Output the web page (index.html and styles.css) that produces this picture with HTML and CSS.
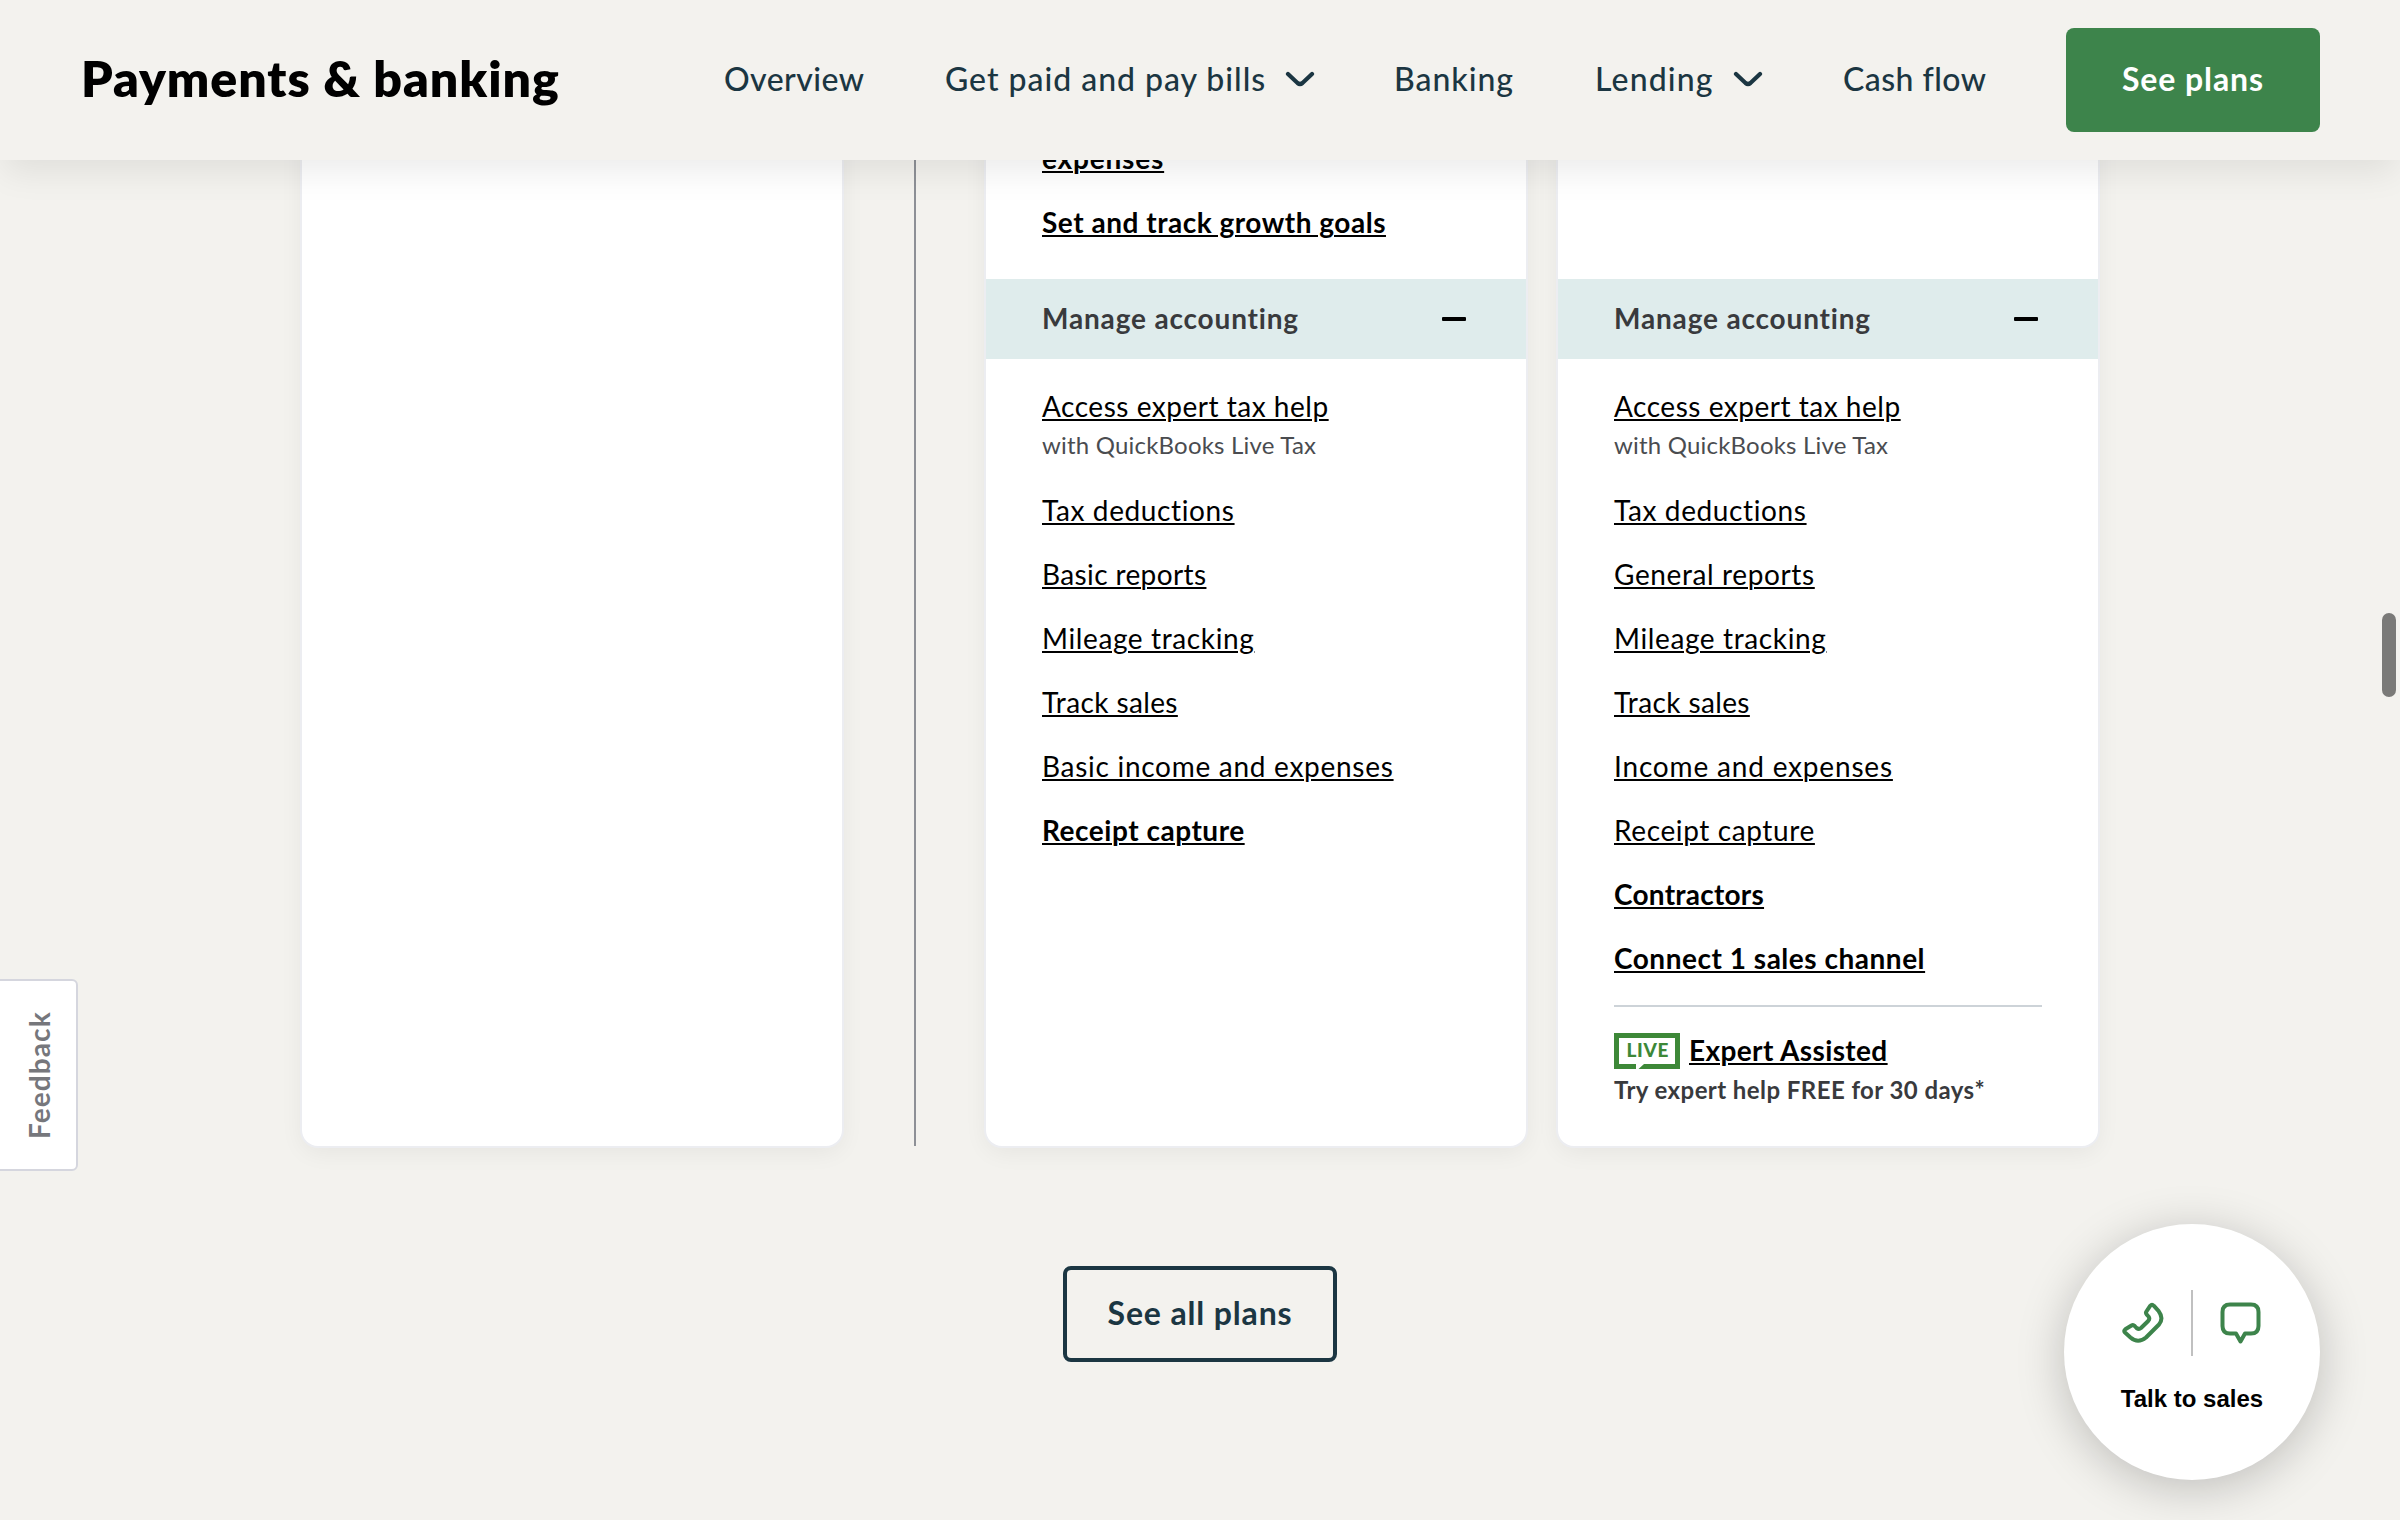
FILE: index.html
```html
<!DOCTYPE html>
<html lang="en">
<head>
<meta charset="utf-8">
<title>Payments &amp; banking</title>
<link rel="stylesheet" href="styles.css">
</head>
<body>
<header class="topbar">
  <h1 class="topbar-title">Payments &amp; banking</h1>
  <nav class="nav">
    <a class="nav-link overview">Overview</a>
    <a class="nav-link paid">Get paid and pay bills <svg class="chevron" viewBox="0 0 30 16"><path d="M3 3l9.5 9q2.5 2 5 0L27 3"/></svg></a>
    <a class="nav-link banking">Banking</a>
    <a class="nav-link lending">Lending <svg class="chevron" viewBox="0 0 30 16"><path d="M3 3l9.5 9q2.5 2 5 0L27 3"/></svg></a>
    <a class="nav-link cash">Cash flow</a>
  </nav>
  <a class="see-plans">See plans</a>
</header>

<main class="page">
  <section class="plans">
    <article class="card"></article>
    <div class="rule"></div>
    <div class="pair">
      <article class="card">
        <ul class="list top">
          <li><a class="link bold ls-8">expenses</a></li>
          <li><a class="link bold ls-5">Set and track growth goals</a></li>
        </ul>
        <div class="band"><span>Manage accounting</span><i class="minus"></i></div>
        <ul class="list">
          <li><a class="link ls-5">Access expert tax help</a><p class="sub">with QuickBooks Live Tax</p></li>
          <li><a class="link ls-6">Tax deductions</a></li>
          <li><a class="link ls-4">Basic reports</a></li>
          <li><a class="link ls-6">Mileage tracking</a></li>
          <li><a class="link ls-4">Track sales</a></li>
          <li><a class="link ls-7">Basic income and expenses</a></li>
          <li><a class="link bold ls-5">Receipt capture</a></li>
        </ul>
      </article>
      <article class="card">
        <div class="top spacer"></div>
        <div class="band"><span>Manage accounting</span><i class="minus"></i></div>
        <ul class="list">
          <li><a class="link ls-5">Access expert tax help</a><p class="sub">with QuickBooks Live Tax</p></li>
          <li><a class="link ls-6">Tax deductions</a></li>
          <li><a class="link ls-6">General reports</a></li>
          <li><a class="link ls-6">Mileage tracking</a></li>
          <li><a class="link ls-4">Track sales</a></li>
          <li><a class="link ls-8">Income and expenses</a></li>
          <li><a class="link ls-6">Receipt capture</a></li>
          <li><a class="link bold ls-2">Contractors</a></li>
          <li><a class="link bold ls-5">Connect 1 sales channel</a></li>
        </ul>
        <div class="live">
          <div class="live-row">
            <svg class="live-badge" viewBox="0 0 66 36"><path class="live-frame" fill-rule="evenodd" d="M0 0H66V36H24.500L30 31H61V5H5V31H22V36H0Z"/><text x="12.500" y="24" textLength="42">LIVE</text></svg>
            <a class="link bold ls-4">Expert Assisted</a>
          </div>
          <p class="sub strong">Try expert help FREE for 30 days*</p>
        </div>
      </article>
    </div>
  </section>
  <a class="all-plans">See all plans</a>
</main>

<div class="feedback">Feedback</div>

<aside class="talk">
  <div class="talk-icons">
    <svg class="icon" viewBox="0 0 42 42"><path d="M28.300 3.700q1.700-2 3.400 0l5 5.500q5.300 7 .3 13.300L24 35.500q-8 6.500-15.500 0L3 30.500q-1.700-1.700.3-3.200l6.200-3.800q1.700-1 3.200.5l1.800 2q2.500 1.700 4.500 0l7.200-7q2-2.200.3-4.500l-1.700-1.800q-1.500-1.700-.3-3.400z"/></svg>
    <i class="talk-rule"></i>
    <svg class="icon" viewBox="0 0 42 42"><path d="M10 2.500H31Q38.500 2.500 38.500 10V24Q38.500 31.500 31 31.500H25L20.500 39.500 16 31.500H10Q2.500 31.500 2.500 24V10Q2.500 2.500 10 2.500Z"/></svg>
  </div>
  <span class="talk-label">Talk to sales</span>
</aside>

<div class="scroll-thumb"></div>
</body>
</html>
```
FILE: styles.css
```css
* { box-sizing: border-box; }

body {
  margin: 0;
  width: 2400px;
  height: 1520px;
  overflow: hidden;
  position: relative;
  background: #f3f2ee;
  color: #000;
  font-family: Lato, "Open Sans", sans-serif;
}

h1, p, ul { margin: 0; padding: 0; }
ul { list-style: none; }

.topbar {
  position: relative;
  z-index: 2;
  display: flex;
  align-items: center;
  height: 160px;
  padding: 0 80px;
  background: #f3f2ee;
  box-shadow: 0 16px 32px -4px rgba(0, 0, 0, .08);
}

.topbar-title {
  width: 644px;
  font-size: 50px;
  line-height: 64px;
  font-weight: 800;
  letter-spacing: .95px;
  padding: 0 0 5px 1px;
}

.nav {
  flex: 1;
  display: flex;
  align-items: center;
}

.nav-link {
  display: flex;
  align-items: center;
  font-size: 32px;
  line-height: 40px;
  font-weight: 500;
  color: #1b3642;
  white-space: nowrap;
  padding-bottom: 2px;
}

.overview { width: 221px; letter-spacing: .45px; }
.paid { width: 449px; letter-spacing: .97px; }
.banking { width: 201px; letter-spacing: .95px; }
.lending { width: 248px; letter-spacing: 1.15px; }
.cash { letter-spacing: .45px; }

.chevron {
  width: 30px;
  height: 16px;
  margin-left: 19px;
  fill: none;
  stroke: #1b3642;
  stroke-width: 4.200;
  stroke-linecap: round;
}

.see-plans {
  width: 254px;
  height: 104px;
  border-radius: 8px;
  background: #3d844b;
  color: #fff;
  font-size: 32px;
  line-height: 102px;
  font-weight: 700;
  letter-spacing: .9px;
  text-align: center;
}

.page {
  display: flex;
  flex-direction: column;
  align-items: center;
  gap: 120px;
  margin-top: -40px;
}

.plans {
  display: flex;
  width: 1796px;
  height: 1026px;
}

.card {
  width: 540px;
  height: 1026px;
  border-radius: 0 0 16px 16px;
  background: #fff;
  box-shadow: 0 0 0 2px #ecedf1, 0 6px 24px rgba(0, 0, 0, .06);
}

.rule { width: 2px; margin: 0 70px 0 72px; background: #8d9096; }

.pair { display: flex; gap: 32px; }

.list {
  display: flex;
  flex-direction: column;
  gap: 24px;
  padding: 27px 56px 0;
}

.list li { font-size: 28px; line-height: 40px; }

.top { height: 159px; padding-top: 18px; }

.link {
  font-size: 28px;
  line-height: 40px;
  display: block;
  width: max-content;
  text-decoration: underline;
  text-decoration-thickness: 2px;
  text-underline-offset: 2px;
}

.bold { font-weight: 700; }

.ls-2 { letter-spacing: .24px; }
.ls-4 { letter-spacing: .38px; }
.ls-5 { letter-spacing: .52px; }
.ls-6 { letter-spacing: .62px; }
.ls-7 { letter-spacing: .72px; }
.ls-8 { letter-spacing: .82px; }

.band {
  display: flex;
  align-items: center;
  justify-content: space-between;
  height: 80px;
  padding: 0 60px 0 56px;
  background: #dfecec;
  color: #393a3d;
  font-size: 28px;
  line-height: 40px;
  font-weight: 700;
  letter-spacing: .83px;
}

.band span { padding-bottom: 2px; }

.minus {
  width: 24px;
  height: 4px;
  border-radius: 1px;
  background: #000;
}

.sub {
  margin-top: 1px;
  padding-bottom: 3px;
  font-size: 24px;
  line-height: 36px;
  letter-spacing: .2px;
  color: #4a4c50;
}

.strong {
  margin-top: 2px;
  font-weight: 700;
  letter-spacing: .43px;
  color: #393a3d;
}

.live {
  margin: 27px 56px 0;
  padding-top: 23px;
  border-top: 2px solid #cdd3d8;
}

.live-row { display: flex; align-items: center; gap: 9px; }

.live-badge { width: 66px; height: 36px; margin-top: 2px; }
.live-frame { fill: #3d8838; }
.live-badge text { font: 900 19px Lato, sans-serif; fill: #3d8838; }

.all-plans {
  width: 274px;
  height: 96px;
  border: 4px solid #1b3642;
  border-radius: 8px;
  color: #1b3642;
  font-size: 32px;
  line-height: 86px;
  font-weight: 700;
  letter-spacing: .85px;
  text-align: center;
}

.feedback {
  position: absolute;
  left: -2px;
  top: 979px;
  width: 80px;
  height: 192px;
  border: 2px solid #d5d6de;
  border-radius: 6px 0 0 6px;
  background: #fff;
  color: #76777c;
  font-size: 28px;
  line-height: 78px;
  font-weight: 700;
  letter-spacing: 1.1px;
  text-align: center;
  writing-mode: vertical-rl;
  transform: rotate(180deg);
}

.talk {
  position: absolute;
  left: 2064px;
  top: 1224px;
  width: 256px;
  height: 256px;
  border-radius: 50%;
  background: #fff;
  box-shadow: 0 8px 48px rgba(0, 0, 0, .22);
  display: flex;
  flex-direction: column;
  align-items: center;
  padding-top: 66px;
}

.talk-icons { display: flex; align-items: center; gap: 27px; }

.icon {
  width: 42px;
  height: 42px;
  margin-bottom: 1px;
  fill: none;
  stroke: #3d844b;
  stroke-width: 4;
  stroke-linejoin: round;
}

.talk-rule { width: 2px; height: 66px; background: #c0c0c0; }

.talk-label {
  margin-top: 29px;
  font: bold 24px/28px "Liberation Sans", Arial, sans-serif;
}

.scroll-thumb {
  position: absolute;
  left: 2382px;
  top: 613px;
  width: 14px;
  height: 84px;
  border-radius: 7px;
  background: #7a7a78;
}
```
